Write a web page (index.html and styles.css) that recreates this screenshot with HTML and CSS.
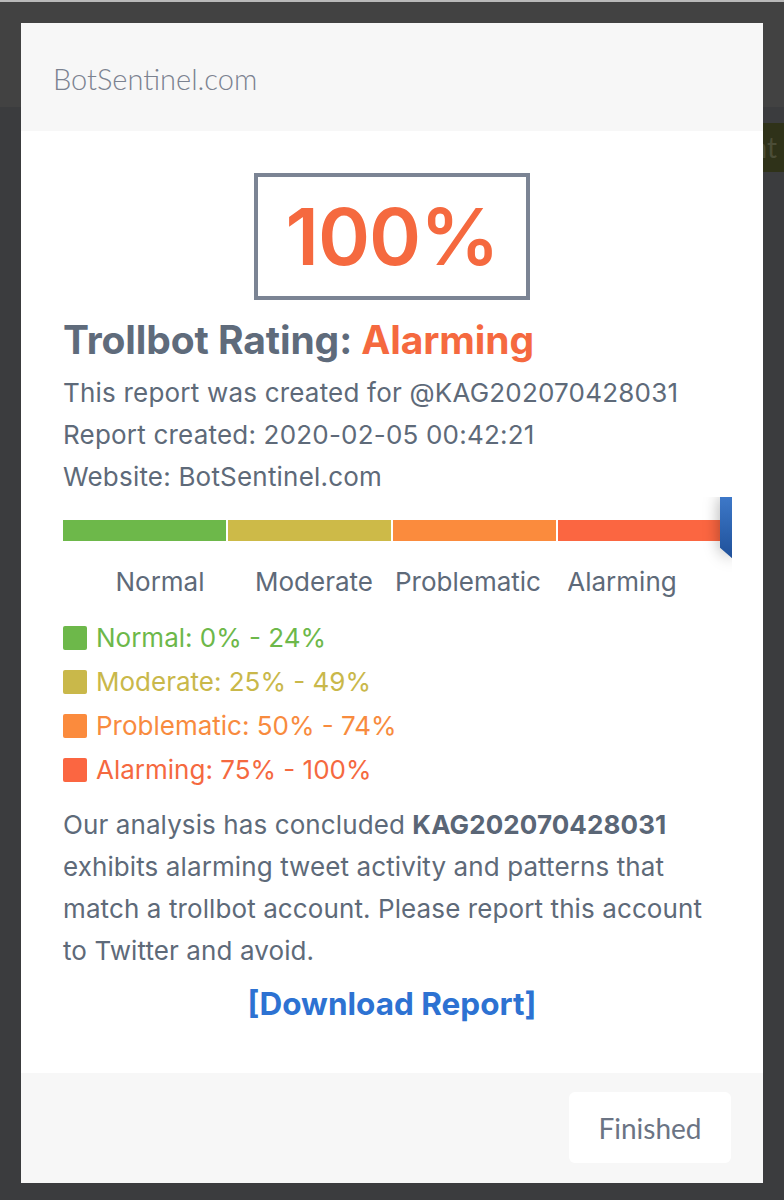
FILE: index.html
```html
<!DOCTYPE html>
<html>
<head>
<meta charset="utf-8">
<link rel="stylesheet" href="styles.css">
</head>
<body>
<div class="backdrop">
  <div class="topline"></div>
  <div class="navband"></div>
  <div class="subband"><span class="ghost-btn">nt</span></div>
</div>
<div class="modal">
  <div class="modal-header">BotSentinel.com</div>
  <div class="modal-body">
    <div class="score-box">100%</div>
    <h2 class="rating">Trollbot Rating: <span class="alarm">Alarming</span></h2>
    <div class="meta-list">
      <p class="meta">This report was created for @KAG202070428031</p>
      <p class="meta">Report created: 2020-02-05 00:42:21</p>
      <p class="meta">Website: BotSentinel.com</p>
    </div>
    <div class="scale">
      <div class="bar">
        <span class="seg seg-normal"></span>
        <span class="seg seg-moderate"></span>
        <span class="seg seg-problematic"></span>
        <span class="seg seg-alarming"></span>
        <span class="marker-wrap"><span class="marker"></span></span>
      </div>
      <div class="labels">
        <span>Normal</span>
        <span>Moderate</span>
        <span>Problematic</span>
        <span>Alarming</span>
      </div>
    </div>
    <ul class="legend">
      <li class="lg-normal"><span class="sw"></span>Normal: 0% - 24%</li>
      <li class="lg-moderate"><span class="sw"></span>Moderate: 25% - 49%</li>
      <li class="lg-problematic"><span class="sw"></span>Problematic: 50% - 74%</li>
      <li class="lg-alarming"><span class="sw"></span>Alarming: 75% - 100%</li>
    </ul>
    <p class="summary">Our analysis has concluded <b>KAG202070428031</b> exhibits alarming tweet activity and patterns that match a trollbot account. Please report this account to Twitter and avoid.</p>
    <div class="download"><a href="#">[Download Report]</a></div>
  </div>
  <div class="modal-footer">
    <button class="finish">Finished</button>
  </div>
</div>
</body>
</html>
```
FILE: styles.css
```css
html, body {
  margin: 0;
  padding: 0;
}
body {
  width: 784px;
  height: 1200px;
  background: #3b3c3e;
  position: relative;
  overflow: hidden;
  font-family: Inter, "Noto Sans", sans-serif;
}
.backdrop {
  display: flex;
  flex-direction: column;
}
.topline {
  height: 2px;
  background: #b9b9b9;
}
.navband {
  height: 105px;
  background: #424242;
}
.subband {
  height: 90px;
  display: flex;
  justify-content: flex-end;
  align-items: flex-start;
  padding-top: 16px;
}
.ghost-btn {
  width: 60px;
  height: 49px;
  box-sizing: border-box;
  padding-right: 7px;
  text-align: right;
  background: #2f3219;
  color: #4b4d37;
  font: 28px Lato, sans-serif;
  line-height: 49px;
  white-space: nowrap;
}
.modal {
  position: absolute;
  left: 21px;
  top: 23px;
  width: 742px;
  height: 1160px;
  background: #fff;
  display: flex;
  flex-direction: column;
}
.modal-header {
  height: 108px;
  box-sizing: border-box;
  background: #f7f7f7;
  padding: 39px 0 0 32px;
  font-family: Lato, sans-serif;
  font-weight: 300;
  font-size: 29px;
  color: #7b8290;
  line-height: 34px;
}
.modal-body {
  flex: 1;
  padding: 42px 42px 0 42px;
  color: #5e6a79;
  overflow: hidden;
}
.score-box {
  width: 268px;
  height: 119px;
  margin: 0 auto;
  border: 4px solid #7b8494;
  color: #f5693f;
  font-weight: 600;
  font-size: 79px;
  line-height: 119px;
  text-align: center;
  letter-spacing: -1px;
}
.rating {
  margin: 18px 0 0;
  font-size: 39px;
  line-height: 44px;
  font-weight: 700;
  color: #5f6b7b;
  letter-spacing: -0.1px;
}
.alarm {
  color: #f5693f;
}
.meta-list {
  margin-top: 10px;
}
.meta {
  margin: 0;
  font-size: 26px;
  line-height: 42px;
  letter-spacing: 0.2px;
}
.scale {
  margin-right: -11px;
  overflow: hidden;
  padding-top: 23px;
  margin-top: -1px;
  padding-bottom: 10px;
}
.bar {
  position: relative;
  height: 21px;
  display: flex;
  gap: 2px;
}
.seg {
  width: 163px;
  height: 21px;
}
.seg-normal { background: #6db84a; }
.seg-moderate { background: #cdba48; }
.seg-problematic { background: #fb8b3d; }
.seg-alarming { background: #fb6641; }
.marker-wrap {
  position: absolute;
  left: 657px;
  top: -23px;
  filter: drop-shadow(0 0 8px rgba(0,0,0,0.35));
}
.marker {
  display: block;
  width: 13px;
  height: 62px;
  background: linear-gradient(180deg, #3d78c8, #1f5099);
  clip-path: polygon(0 0, 100% 0, 100% 100%, 0 82%);
}
.labels {
  display: flex;
  margin-top: 26px;
  padding-left: 20px;
  font-size: 26px;
  line-height: 30px;
}
.labels span {
  width: 154px;
  flex: none;
  text-align: center;
}
.legend {
  list-style: none;
  margin: 9px 0 0;
  padding: 0;
}
.legend li {
  display: flex;
  align-items: center;
  font-size: 26px;
  line-height: 44px;
}
.sw {
  width: 24px;
  height: 24px;
  border-radius: 2px;
  margin-right: 9px;
}
.lg-normal { color: #6db84a; }
.lg-normal .sw { background: #6db84a; }
.lg-moderate { color: #c9b84a; }
.lg-moderate .sw { background: #c9b84a; }
.lg-problematic { color: #f88b3e; }
.lg-problematic .sw { background: #fb8b3d; }
.lg-alarming { color: #f5693f; }
.lg-alarming .sw { background: #fb6641; }
.summary {
  margin: 12px 0 0;
  font-size: 26px;
  line-height: 42px;
  letter-spacing: 0.1px;
}
.summary b {
  font-weight: 700;
  color: #5a6676;
}
.download {
  margin-top: 12px;
  text-align: center;
}
.download a {
  color: #2d72d2;
  font-weight: 700;
  font-size: 31.5px;
  line-height: 40px;
  text-decoration: none;
}
.modal-footer {
  height: 110px;
  background: #f7f7f7;
  display: flex;
  justify-content: flex-end;
  align-items: flex-start;
  padding: 19px 32px 0 0;
  box-sizing: border-box;
}
.finish {
  width: 162px;
  height: 71px;
  border: none;
  border-radius: 6px;
  background: #fff;
  color: #6b7484;
  font-family: Lato, sans-serif;
  font-size: 28px;
  padding: 0;
}
```
